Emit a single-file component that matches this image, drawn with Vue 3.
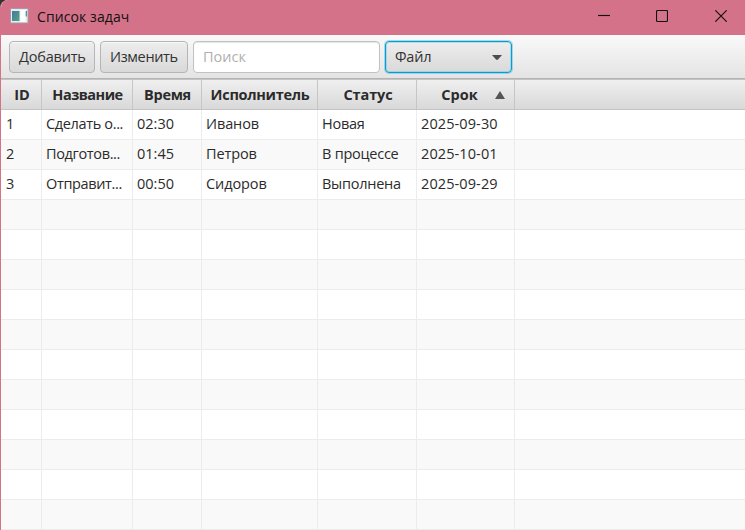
<script setup>
const columns = [
  { key: 'id', title: 'ID' },
  { key: 'name', title: 'Название' },
  { key: 'time', title: 'Время' },
  { key: 'owner', title: 'Исполнитель' },
  { key: 'status', title: 'Статус' },
  { key: 'due', title: 'Срок', sorted: true },
  { key: 'filler', title: '' },
]
const tasks = [
  { id: '1', name: 'Сделать о...', time: '02:30', owner: 'Иванов', status: 'Новая', due: '2025-09-30' },
  { id: '2', name: 'Подготов...', time: '01:45', owner: 'Петров', status: 'В процессе', due: '2025-10-01' },
  { id: '3', name: 'Отправит...', time: '00:50', owner: 'Сидоров', status: 'Выполнена', due: '2025-09-29' },
]
const rows = Array.from({ length: 14 }, (_, i) => tasks[i] || {})
</script>

<template>
  <div class="window">
    <header class="titlebar">
      <svg class="app-icon" width="19" height="16" viewBox="0 0 19 16">
        <defs>
          <linearGradient id="pane" x1="0" y1="0" x2="1" y2="1">
            <stop offset="0" stop-color="#4778a4" />
            <stop offset="1" stop-color="#4da783" />
          </linearGradient>
        </defs>
        <rect x="0.5" y="0.5" width="17.5" height="14.5" fill="#e8eef0" stroke="#a99aa5" />
        <rect x="2" y="3" width="7.5" height="10" fill="url(#pane)" />
        <rect x="10.5" y="2" width="5" height="12" fill="#fff" />
        <rect x="15.7" y="3" width="1.3" height="5.5" fill="#4c9c93" />
      </svg>
      <span class="title">Список задач</span>
      <div class="controls">
        <svg width="12" height="12" viewBox="0 0 12 12"><path d="M0 5.5H12" /></svg>
        <svg width="12" height="12" viewBox="0 0 12 12"><rect x="0.5" y="0.5" width="11" height="11" rx="1" /></svg>
        <svg width="12" height="12" viewBox="0 0 12 12"><path d="M0.3 0.3L11.7 11.7M11.7 0.3L0.3 11.7" /></svg>
      </div>
    </header>
    <div class="toolbar">
      <button class="btn add"><span>Добавить</span></button>
      <button class="btn edit"><span>Изменить</span></button>
      <div class="search"><span>Поиск</span></div>
      <button class="btn menu">
        <span>Файл</span>
        <svg width="10" height="5" viewBox="0 0 10 5"><path d="M0 0H10L6 4.5Q5 5.3 4 4.5Z" fill="#4d4d4d" /></svg>
      </button>
    </div>
    <div class="grid head">
      <div v-for="c in columns" :key="c.key" class="th" :class="c.key">
        <span>{{ c.title }}</span>
        <svg v-if="c.sorted" class="arrow" width="10" height="8" viewBox="0 0 10 8"><path d="M5 0L10 8H0Z" fill="#555" /></svg>
      </div>
    </div>
    <div v-for="(r, i) in rows" :key="i" class="grid row" :class="{ odd: i % 2 }">
      <div v-for="c in columns" :key="c.key" class="td" :class="c.key"><span>{{ r[c.key] }}</span></div>
    </div>
  </div>
</template>

<style>
body { background: #333; overflow: hidden; }
</style>

<style scoped>
.window {
  box-sizing: border-box;
  width: 745px;
  height: 530px;
  overflow: hidden;
  border-left: 1px solid #d4728a;
  border-top-left-radius: 8px;
  background: #fff;
  color: #2b2b2b;
  font: 14.5px/20px "Open Sans", "Noto Sans", sans-serif;
}
span { white-space: nowrap; }
.titlebar {
  display: flex;
  align-items: center;
  height: 35px;
  padding-left: 9px;
  background: #d4728a;
  color: #111;
}
.app-icon { margin-top: -3px; }
.title { margin: -2px 0 0 8px; font-size: 14px; letter-spacing: 0.1px; }
.controls { display: flex; gap: 47px; margin: -3px 18px 0 auto; }
.controls svg { fill: none; stroke: #111; stroke-width: 1.15; }
.controls svg:first-child { margin-right: -1px; }
.toolbar {
  box-sizing: border-box;
  display: flex;
  gap: 5px;
  height: 44px;
  padding: 6px 8px 0;
  background: linear-gradient(#f9f9f9, #e4e4e4);
  border-bottom: 1px solid #b4b4b4;
}
.btn, .search {
  box-sizing: border-box;
  height: 32px;
  border: 1px solid #b5b5b5;
  border-radius: 4px;
  font: inherit;
  color: #323232;
  padding: 0 9px;
  display: flex;
  align-items: center;
}
.btn { background: linear-gradient(#ededed, #d9d9d9); box-shadow: inset 0 1px #f8f8f8; letter-spacing: -0.2px; }
.add { width: 86px; }
.edit { width: 88px; letter-spacing: -0.35px; }
.add, .edit { padding-bottom: 1px; }
.search { width: 187px; background: #fff; box-shadow: inset 0 1px 1px #e6e6e6; border-color: #c2c2c2; color: #b0b0b0; }
.menu { width: 127px; justify-content: space-between; border-color: #039ed3; box-shadow: 0 0 0 1px #5fc0e088, inset 0 0 0 1px #5fc0e066; }
.grid { display: grid; grid-template-columns: 41px 91px 69px 116px 99px 98px 1fr; height: 30px; }
.head {
  box-sizing: border-box;
  height: 31px;
  border-top: 1px solid #c4c4c4;
  border-bottom: 1px solid #c4c4c4;
  background: linear-gradient(#efefef, #d9d9d9);
  font-weight: 700;
  letter-spacing: -0.3px;
}
.th, .td { box-sizing: border-box; display: flex; align-items: center; border-right: 1px solid #c6c6c6; }
.th { justify-content: center; padding: 1px 0 0 1px; }
.th.name { letter-spacing: -0.5px; }
.th.id, .th.status { letter-spacing: -0.1px; padding-left: 2px; }
.th.due { position: relative; padding-right: 13px; letter-spacing: 0; }
.arrow { position: absolute; right: 9px; top: 11px; }
.td { padding: 0 0 2px 4px; border-right-color: #ececec; border-bottom: 1px solid #ececec; }
.td.id { padding-left: 5px; }
.td.name { letter-spacing: -0.35px; }
.td.status { letter-spacing: -0.25px; }
.td.owner { letter-spacing: -0.1px; }
.td.due { letter-spacing: 0.1px; }
.th.filler, .td.filler { border-right: 0; }
.row { background: #fff; }
.row.odd { background: #f9f9f9; }
</style>
